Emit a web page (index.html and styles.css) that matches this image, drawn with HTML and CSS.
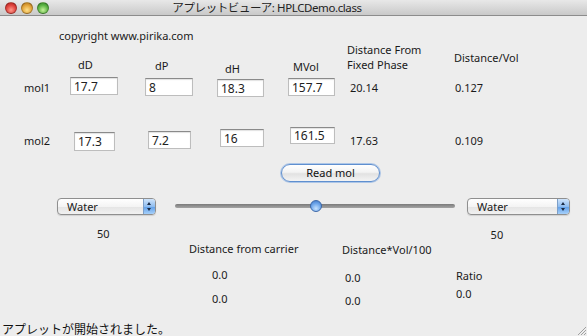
FILE: index.html
```html
<!DOCTYPE html>
<html lang="ja">
<head>
    <meta charset="UTF-8">
    <title>アプレットビューア: HPLCDemo.class</title>
    <link rel="stylesheet" href="styles.css">
</head>
<body>
    <div class="window">
        <div class="titlebar">
            <div class="lights">
                <span class="light red"></span>
                <span class="light yellow"></span>
                <span class="light green"></span>
            </div>
            <div class="title">アプレットビューア: HPLCDemo.class</div>
        </div>

        <div class="applet">
            <p class="copyright">copyright www.pirika.com</p>

            <div class="grid-row head-row">
                <span></span>
                <span class="head">dD</span>
                <span class="head">dP</span>
                <span class="head">dH</span>
                <span class="head">MVol</span>
                <span class="head">Distance From<br>Fixed Phase</span>
                <span class="head">Distance/Vol</span>
            </div>

            <div class="grid-row mol-row mol1">
                <span class="mol-label">mol1</span>
                <input class="field" type="text" value="17.7">
                <input class="field" type="text" value="8">
                <input class="field" type="text" value="18.3">
                <input class="field" type="text" value="157.7">
                <span class="value">20.14</span>
                <span class="value">0.127</span>
            </div>

            <div class="grid-row mol-row mol2">
                <span class="mol-label">mol2</span>
                <input class="field" type="text" value="17.3">
                <input class="field" type="text" value="7.2">
                <input class="field" type="text" value="16">
                <input class="field" type="text" value="161.5">
                <span class="value">17.63</span>
                <span class="value">0.109</span>
            </div>

            <div class="button-row">
                <button class="aqua-button">Read mol</button>
            </div>

            <div class="control-row">
                <div class="combo">
                    <span class="combo-text">Water</span>
                    <span class="combo-arrows"></span>
                </div>
                <div class="slider">
                    <div class="slider-track"></div>
                    <div class="slider-thumb"></div>
                </div>
                <div class="combo combo-right">
                    <span class="combo-text">Water</span>
                    <span class="combo-arrows"></span>
                </div>
            </div>

            <div class="fifty-row">
                <span class="fifty">50</span>
                <span class="fifty fifty-right">50</span>
            </div>

            <div class="results">
                <span class="res">Distance from carrier</span>
                <span class="res">Distance*Vol/100</span>
                <span class="res"></span>

                <span class="res num">0.0</span>
                <span class="res num">0.0</span>
                <span class="res">Ratio</span>

                <span class="res num">0.0</span>
                <span class="res num">0.0</span>
                <span class="res">0.0</span>
            </div>
        </div>

        <div class="status">アプレットが開始されました。</div>
        <svg class="grip" width="10" height="10" viewBox="0 0 10 10">
            <path d="M9 1 L1 9 M9 4 L4 9 M9 7 L7 9" stroke="#a0a0a0" stroke-width="1" fill="none"/>
        </svg>
    </div>
</body>
</html>
```

FILE: styles.css
```css
* {
    margin: 0;
    padding: 0;
    box-sizing: border-box;
}

body {
    font-family: 'Noto Sans', 'Liberation Sans', sans-serif;
    font-size: 11px;
    color: #1a1a1a;
    background: #ededed;
}

.window {
    position: relative;
    width: 587px;
    height: 336px;
    display: flex;
    flex-direction: column;
    background: #ededed;
    overflow: hidden;
}

/* Title bar */
.titlebar {
    height: 16px;
    display: flex;
    align-items: center;
    background: linear-gradient(#e8e8e8, #c9c9c9);
    border-bottom: 1px solid #8c8c8c;
}

.lights {
    display: flex;
    gap: 4px;
    padding-left: 5px;
}

.light {
    width: 12px;
    height: 12px;
    border-radius: 50%;
    border: 1px solid rgba(0, 0, 0, 0.25);
}

.red { background: radial-gradient(circle at 50% 70%, #ff9a8c, #e0443e 55%, #a8201b); }
.yellow { background: radial-gradient(circle at 50% 70%, #ffe08a, #e2a43a 55%, #a96b12); }
.green { background: radial-gradient(circle at 50% 70%, #c6f29a, #5eb545 55%, #2f7d22); }

.title {
    flex: 1;
    text-align: center;
    padding-right: 102px;
    font-size: 11.5px;
    color: #222;
    font-family: 'Noto Sans', 'Noto Sans CJK JP', sans-serif;
    line-height: 16px;
    letter-spacing: -0.4px;
}

/* Applet area */
.applet {
    flex: 1;
    display: flex;
    flex-direction: column;
}

.copyright {
    margin-top: 13px;
    margin-left: 59px;
    height: 13px;
    line-height: 13px;
}

.grid-row {
    display: grid;
    grid-template-columns: 46px 75px 72px 71px 59px 107px 1fr;
    padding-left: 24px;
    align-items: start;
}

.head-row {
    height: 32px;
}

.head {
    line-height: 14px;
}

.head-row .head:nth-child(2) { margin: 16px 0 0 8px; }
.head-row .head:nth-child(3) { margin: 17px 0 0 10px; }
.head-row .head:nth-child(4) { margin: 20px 0 0 8px; }
.head-row .head:nth-child(5) { margin: 18px 0 0 5px; }
.head-row .head:nth-child(6) { margin-top: 0; line-height: 15px; }
.head-row .head:nth-child(7) { margin-top: 9px; }

.mol-row {
    margin-top: 3px;
    height: 20px;
}

.mol2 {
    margin-top: 30px;
    height: 24px;
}

.mol-label {
    line-height: 14px;
    margin-top: 4px;
}

.mol2 .mol-label { margin-top: 7px; }

.field {
    appearance: none;
    height: 18px;
    width: 48px;
    border: 1px solid #bdbdbd;
    border-top-color: #8a8a8a;
    box-shadow: inset 0 1px 1px rgba(0, 0, 0, 0.12);
    background: #fff;
    font-family: inherit;
    font-size: 12px;
    color: #222;
    padding: 0 3px;
    outline: none;
}

.mol1 .field:nth-child(3) { margin-top: 1px; }
.mol1 .field:nth-child(4) { margin-top: 2px; width: 47px; }
.mol1 .field:nth-child(5) { margin-top: 1px; width: 47px; }

.mol2 .field:nth-child(2) { margin: 5px 0 0 4px; width: 41px; height: 19px; }
.mol2 .field:nth-child(3) { margin: 4px 0 0 3px; width: 43px; }
.mol2 .field:nth-child(4) { margin: 2px 0 0 3px; width: 44px; }
.mol2 .field:nth-child(5) { margin: 0 0 0 2px; width: 45px; height: 17px; }

.value {
    line-height: 14px;
    margin-top: 4px;
}

.mol-row .value:nth-child(6) { margin-left: 3px; }
.mol-row .value:nth-child(7) { margin-left: 1px; }
.mol2 .value { margin-top: 7px; }

/* Read mol button */
.button-row {
    margin-top: 13px;
    padding-left: 281px;
}

.aqua-button {
    width: 99px;
    height: 18px;
    border-radius: 9px;
    border: 1px solid #5f8fcf;
    box-shadow: 0 0 0 1px rgba(120, 165, 225, 0.55);
    background: linear-gradient(#ffffff, #f3f3f3 45%, #e2e2e2 55%, #f4f4f4);
    font-family: inherit;
    font-size: 11px;
    color: #111;
    line-height: 16px;
}

/* Combo boxes + slider */
.control-row {
    margin-top: 15px;
    height: 18px;
    display: flex;
    align-items: center;
    padding-left: 57px;
}

.combo {
    width: 99px;
    height: 17px;
    display: flex;
    border: 1px solid #8f8f8f;
    border-radius: 4px;
    background: linear-gradient(#ffffff, #f4f4f4 50%, #e4e4e4 51%, #f1f1f1);
    overflow: hidden;
    box-shadow: 0 1px 1px rgba(0, 0, 0, 0.12);
}

.combo-right {
    width: 103px;
    margin-left: 12px;
}

.combo-text {
    flex: 1;
    padding-left: 9px;
    line-height: 15px;
    font-size: 11px;
}

.combo-arrows {
    width: 12px;
    border-left: 1px solid #7d9fc8;
    background: linear-gradient(#cfe4fb, #8fbdf0 50%, #5f9ee8 51%, #a6d0fa);
    position: relative;
}

.combo-arrows::before,
.combo-arrows::after {
    content: '';
    position: absolute;
    left: 3px;
    border-left: 2.5px solid transparent;
    border-right: 2.5px solid transparent;
}

.combo-arrows::before {
    top: 3px;
    border-bottom: 3px solid #1b2b44;
}

.combo-arrows::after {
    top: 9px;
    border-top: 3px solid #1b2b44;
}

.slider {
    position: relative;
    width: 280px;
    height: 14px;
    margin-left: 19px;
    display: flex;
    align-items: center;
}

.slider-track {
    width: 100%;
    height: 4px;
    border-radius: 2px;
    background: linear-gradient(#7a7a7a, #a4a4a4);
}

.slider-thumb {
    position: absolute;
    left: 135px;
    top: 1px;
    width: 12px;
    height: 12px;
    border-radius: 50%;
    border: 1px solid #3d68a8;
    background: radial-gradient(circle at 50% 75%, #c6e2ff, #6ea6ea 55%, #3a74c8);
}

.fifty-row {
    margin-top: 12px;
    height: 14px;
    line-height: 14px;
    display: flex;
    padding-left: 97px;
}

.fifty-right {
    margin-left: 381px;
    margin-top: 1px;
}

/* Results */
.results {
    margin-top: 1px;
    display: grid;
    grid-template-columns: 153px 114px 1fr;
    grid-template-rows: 14px 14px 14px;
    row-gap: 12px;
    padding-left: 189px;
}

.res {
    line-height: 14px;
}

.results .res:nth-child(2) { margin-top: 1px; }
.results .num:nth-child(4) { margin-left: 23px; }
.results .num:nth-child(5) { margin: 3px 0 0 3px; }
.results .res:nth-child(6) { margin-top: 1px; }
.results .num:nth-child(7) { margin: -2px 0 0 23px; }
.results .num:nth-child(8) { margin: 0 0 0 3px; }
.results .res:nth-child(9) { margin-top: -7px; }

.status {
    height: 14px;
    line-height: 14px;
    padding-left: 2px;
    font-family: 'Noto Sans CJK JP', sans-serif;
    font-size: 12px;
    color: #111;
}

.grip {
    position: absolute;
    right: 0;
    bottom: 0;
}
```
